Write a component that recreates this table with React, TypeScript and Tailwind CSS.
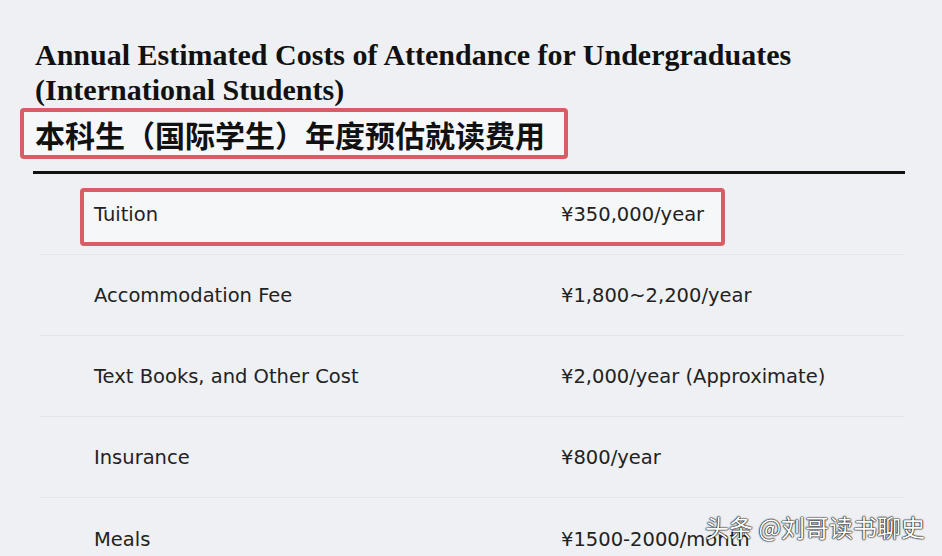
const rows = [
  { item: "Tuition", cost: "¥350,000/year", marked: true },
  { item: "Accommodation Fee", cost: "¥1,800~2,200/year" },
  { item: "Text Books, and Other Cost", cost: "¥2,000/year (Approximate)" },
  { item: "Insurance", cost: "¥800/year" },
  { item: "Meals", cost: "¥1500-2000/month" },
];

function App() {
  return (
    <div className="relative w-[942px] h-[556px] overflow-hidden bg-[#eef0f3]">
      <div className="pt-[37px] pl-[35px] pr-[20px]">
        <h1 className="font-['Liberation_Serif',serif] font-bold text-[30px] leading-[35px] text-[#111] whitespace-nowrap">
          Annual Estimated Costs of Attendance for Undergraduates
          <br />
          (International Students)
        </h1>
        <div className="-ml-[15px] mt-[1px] w-[548px] h-[51px] border-4 border-[#d85d66] rounded-[4px] bg-[#f6f7f9] flex items-center pl-[11px]">
          <span className="font-['Noto_Sans_CJK_SC',sans-serif] font-bold text-[30px] leading-none text-[#111]">
            本科生（国际学生）年度预估就读费用
          </span>
        </div>
      </div>
      <div className="ml-[33px] mr-[37px] mt-[12px] h-[3px] bg-[#111]" />
      <div className="ml-[40px] mr-[37px]">
        {rows.map((row, i) => (
          <div
            key={row.item}
            className={`relative h-[81px] flex items-center pt-[2px] text-[19.5px] text-[#222] font-['DejaVu_Sans',sans-serif] ${i < rows.length - 1 ? "border-b border-[#e2e5ea]" : ""}`}
          >
            {row.marked && (
              <div className="absolute left-[40px] w-[645px] top-[14px] h-[58px] border-4 border-[#d85d66] rounded-[4px] bg-[#f6f7f9]" />
            )}
            <span className="relative w-[521px] pl-[54px]">{row.item}</span>
            <span className="relative">{row.cost}</span>
          </div>
        ))}
      </div>
      <div className="absolute left-[705px] top-[509px] text-[24px] text-white font-['Noto_Sans_CJK_SC',sans-serif] [text-shadow:0_0_2px_#000,0_0_1px_#000,0_0_1px_#000]">
        头条 @刘哥读书聊史
      </div>
    </div>
  );
}

export default App;
